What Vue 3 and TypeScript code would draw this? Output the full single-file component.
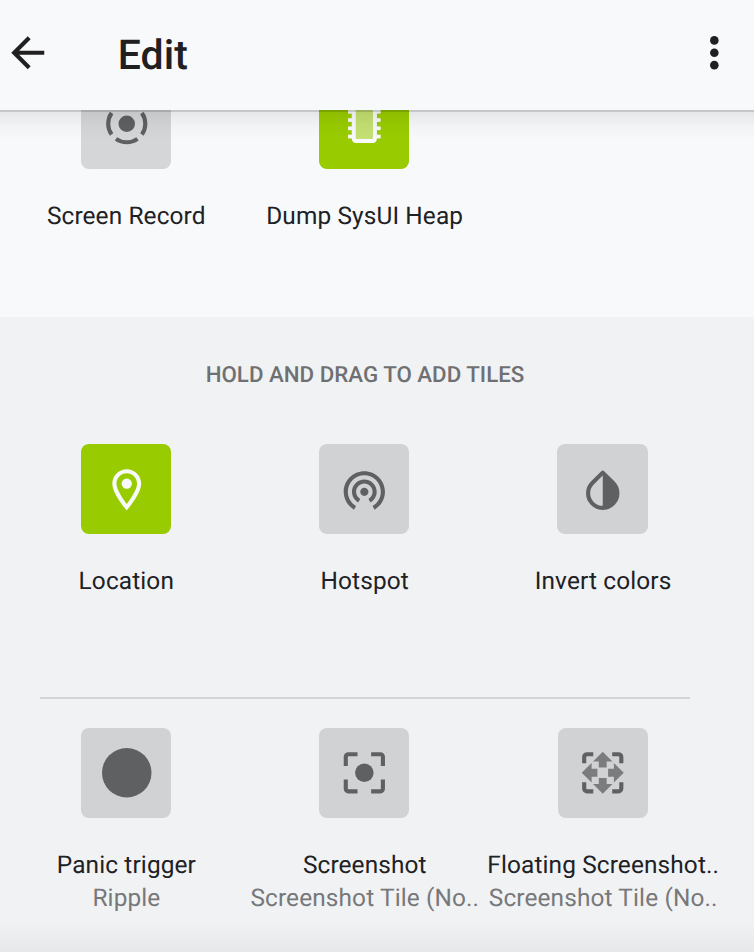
<script setup lang="ts">
type IconName = 'record' | 'heap' | 'location' | 'hotspot' | 'invert' | 'panic' | 'screenshot' | 'floating'

interface Tile {
  icon: IconName
  label: string
  owner?: string
  active?: boolean
}

interface TileRow {
  id: string
  tiles: Tile[]
}

interface Section {
  id: string
  title?: string
  rows: TileRow[]
}

const sections: Section[] = [
  {
    id: 'current',
    rows: [
      {
        id: 'clipped',
        tiles: [
          { icon: 'record', label: 'Screen Record' },
          { icon: 'heap', label: 'Dump SysUI Heap', active: true },
        ],
      },
    ],
  },
  {
    id: 'available',
    title: 'HOLD AND DRAG TO ADD TILES',
    rows: [
      {
        id: 'system',
        tiles: [
          { icon: 'location', label: 'Location', active: true },
          { icon: 'hotspot', label: 'Hotspot' },
          { icon: 'invert', label: 'Invert colors' },
        ],
      },
      {
        id: 'apps',
        tiles: [
          { icon: 'panic', label: 'Panic trigger', owner: 'Ripple' },
          { icon: 'screenshot', label: 'Screenshot', owner: 'Screenshot Tile (No..' },
          { icon: 'floating', label: 'Floating Screenshot..', owner: 'Screenshot Tile (No..' },
        ],
      },
    ],
  },
]

// Vertical positions of the chip's pins
const pins = [1.3, 5.3, 9.3, 13.3, 17.3]
</script>

<template>
  <div class="screen">
    <header class="toolbar">
      <svg class="back" viewBox="0 0 24 24"><path d="M20 11H7.83l5.59-5.59L12 4l-8 8 8 8 1.41-1.41L7.83 13H20v-2z" /></svg>
      <h1>Edit</h1>
      <svg class="more" viewBox="0 0 24 24">
        <circle cx="11.8" cy="6" r="2.08" />
        <circle cx="11.8" cy="12" r="2.08" />
        <circle cx="11.8" cy="18" r="2.08" />
      </svg>
    </header>

    <section v-for="section in sections" :key="section.id" :class="section.id">
      <h2 v-if="section.title">{{ section.title }}</h2>
      <div v-for="row in section.rows" :key="row.id" :class="['row', row.id]">
        <div v-for="tile in row.tiles" :key="tile.label" class="cell">
          <div :class="['tile', { active: tile.active }]">
            <svg viewBox="0 0 24 24">
              <g v-if="tile.icon === 'record'">
                <circle cx="12" cy="12" r="4" />
                <g class="arc">
                  <path d="M4.67 6.78A9 9 0 0 0 4.67 17.22" />
                  <path d="M6.78 19.33A9 9 0 0 0 17.22 19.33" />
                  <path d="M19.33 17.22A9 9 0 0 0 19.33 6.78" />
                  <path d="M17.22 4.67A9 9 0 0 0 6.78 4.67" />
                </g>
              </g>
              <g v-else-if="tile.icon === 'heap'">
                <rect v-for="y in pins" :key="y" x="3.9" :y="y" width="15.8" height="1.8" />
                <rect x="5.7" y="0" width="12.2" height="21.3" rx="2" />
                <rect class="core-back" x="7.7" y="2" width="8.2" height="17.3" />
                <rect class="core" x="7.7" y="2" width="8.2" height="17.3" />
              </g>
              <g v-else-if="tile.icon === 'location'">
                <path d="M12 2C8.13 2 5 5.13 5 9c0 5.25 7 13 7 13s7-7.75 7-13c0-3.87-3.13-7-7-7zM7 9c0-2.76 2.24-5 5-5s5 2.24 5 5c0 2.88-2.88 7.19-5 9.88C9.92 16.21 7 11.85 7 9z" />
                <circle cx="12" cy="9" r="2.5" />
              </g>
              <path v-else-if="tile.icon === 'hotspot'" transform="translate(-0.2 0)" d="M12 11c-1.1 0-2 .9-2 2s.9 2 2 2 2-.9 2-2-.9-2-2-2zm6 2c0-3.31-2.69-6-6-6s-6 2.69-6 6c0 2.22 1.21 4.15 3 5.19l1-1.74c-1.19-.7-2-1.97-2-3.45 0-2.21 1.79-4 4-4s4 1.79 4 4c0 1.48-.81 2.75-2 3.45l1 1.74c1.79-1.04 3-2.97 3-5.19zM12 3C6.48 3 2 7.48 2 13c0 3.7 2.01 6.92 4.99 8.65l1-1.73C5.61 18.53 4 15.96 4 13c0-4.42 3.58-8 8-8s8 3.58 8 8c0 2.96-1.61 5.53-4 6.92l1 1.73c2.99-1.73 5-4.95 5-8.65 0-5.52-4.48-10-10-10z" />
              <g v-else-if="tile.icon === 'invert'" class="drop">
                <path d="M6.95 8.7 12 3.7l5.05 5a7.1 7.1 0 1 1-10.1 0z" />
                <path class="solid" d="M12 3.7l5.05 5A7.1 7.1 0 0 1 12 20.7z" />
              </g>
              <circle v-else-if="tile.icon === 'panic'" cx="12" cy="12" r="12" />
              <g v-else-if="tile.icon === 'screenshot'" transform="translate(-0.2 0)">
                <circle cx="12" cy="12" r="4.5" />
                <path class="frame" d="M3 8.7V4.2A1.2 1.2 0 0 1 4.2 3H8.7M15.3 3h4.5A1.2 1.2 0 0 1 21 4.2v4.5M21 15.3v4.5a1.2 1.2 0 0 1-1.2 1.2h-4.5M8.7 21H4.2A1.2 1.2 0 0 1 3 19.8v-4.5" />
              </g>
              <g v-else>
                <path class="frame" d="M3 7.4V4.4A1.4 1.4 0 0 1 4.4 3H7.4M16.6 3h3A1.4 1.4 0 0 1 21 4.4v3M21 16.6v3a1.4 1.4 0 0 1-1.4 1.4h-3M7.4 21h-3A1.4 1.4 0 0 1 3 19.6v-3" />
                <path class="arrows" d="M12 1.8l4.7 4.8h-2.8v2.8h-3.8V6.6H7.3zM22.2 12l-4.8 4.7v-2.8h-2.8v-3.8h2.8V7.3zM12 22.2l-4.7-4.8h2.8v-2.8h3.8v2.8h2.8zM1.8 12l4.8-4.7v2.8h2.8v3.8H6.6v2.8z" />
              </g>
            </svg>
          </div>
          <span class="label">{{ tile.label }}</span>
          <span v-if="tile.owner" class="owner">{{ tile.owner }}</span>
        </div>
      </div>
    </section>
  </div>
</template>

<style>
body {
  margin: 0;
}
</style>

<style scoped>
.screen {
  position: relative;
  display: flex;
  flex-direction: column;
  width: 754px;
  height: 952px;
  overflow: hidden;
  background: #f8f9fb;
  color: #202124;
  font-family: Roboto, sans-serif;
  text-rendering: geometricPrecision;
}

.screen::after {
  content: '';
  position: absolute;
  inset: auto 0 0;
  height: 30px;
  background: linear-gradient(rgba(0, 0, 0, 0), rgba(0, 0, 0, 0.045));
}

.toolbar {
  display: flex;
  flex: none;
  align-items: center;
  box-sizing: border-box;
  height: 110px;
  padding: 0 15px 5.4px 3px;
}

.toolbar svg {
  width: 49.5px;
  height: 49.5px;
  fill: #202020;
}

h1 {
  flex: 1;
  margin: 7px 0 0 65.3px;
  color: #202020;
  font-size: 41px;
  font-weight: 500;
  line-height: 50px;
}

.current {
  position: relative;
  flex: none;
  height: 207px;
  overflow: hidden;
}

.current::after {
  content: '';
  position: absolute;
  inset: 0 0 auto;
  height: 28px;
  border-top: 2px solid rgba(0, 0, 0, 0.2);
  background: linear-gradient(rgba(0, 0, 0, 0.07), rgba(0, 0, 0, 0.025) 50%, rgba(0, 0, 0, 0));
}

.available {
  flex: 1;
  background: #f1f2f4;
}

h2 {
  margin: 0 0 0 -24px;
  padding: 43px 0 0;
  color: #6f7072;
  font-size: 22.3px;
  font-weight: 500;
  line-height: 30px;
  text-align: center;
}

.row {
  display: grid;
  grid-template-columns: repeat(3, 238.4px);
  padding-left: 6.6px;
}

.clipped {
  margin-top: -31.6px;
}

.clipped .tile:not(.active) {
  background: #d5d6d8;
}

.system {
  height: 253px;
  padding-top: 54px;
}

.apps {
  justify-content: center;
  width: 649.6px;
  margin-left: 40px;
  padding: 28.7px 0 0;
  border-top: 2px solid #d3d4d6;
}

.apps .cell {
  margin: 0 0.5px 0 -0.5px;
}

.cell {
  display: flex;
  flex-direction: column;
  align-items: center;
  white-space: nowrap;
}

.tile {
  display: flex;
  align-items: center;
  justify-content: center;
  width: 90.3px;
  height: 90.3px;
  margin-bottom: 30.2px;
  border-radius: 8px;
  background: #d1d2d4;
}

.tile.active {
  background: #99cc00;
}

.tile svg {
  width: 49.5px;
  height: 49.5px;
  margin: 0.4px 0 0 1px;
  fill: #5f6062;
  overflow: visible;
}

.tile.active svg {
  fill: #f8f9fb;
}

.arc,
.frame,
.drop {
  fill: none;
  stroke: #5f6062;
  stroke-width: 2;
}

.drop {
  stroke-linejoin: round;
}

.solid {
  fill: #5f6062;
  stroke: none;
}

.core-back {
  fill: #99cc00;
}

.core {
  fill: #f8f9fb;
  fill-opacity: 0.45;
}

.arrows {
  fill: #7b7c7d;
}

.label,
.owner {
  padding-left: 1px;
  font-size: 24.4px;
  line-height: 33px;
  letter-spacing: 0.13px;
}

.owner {
  color: #77787a;
}
</style>
